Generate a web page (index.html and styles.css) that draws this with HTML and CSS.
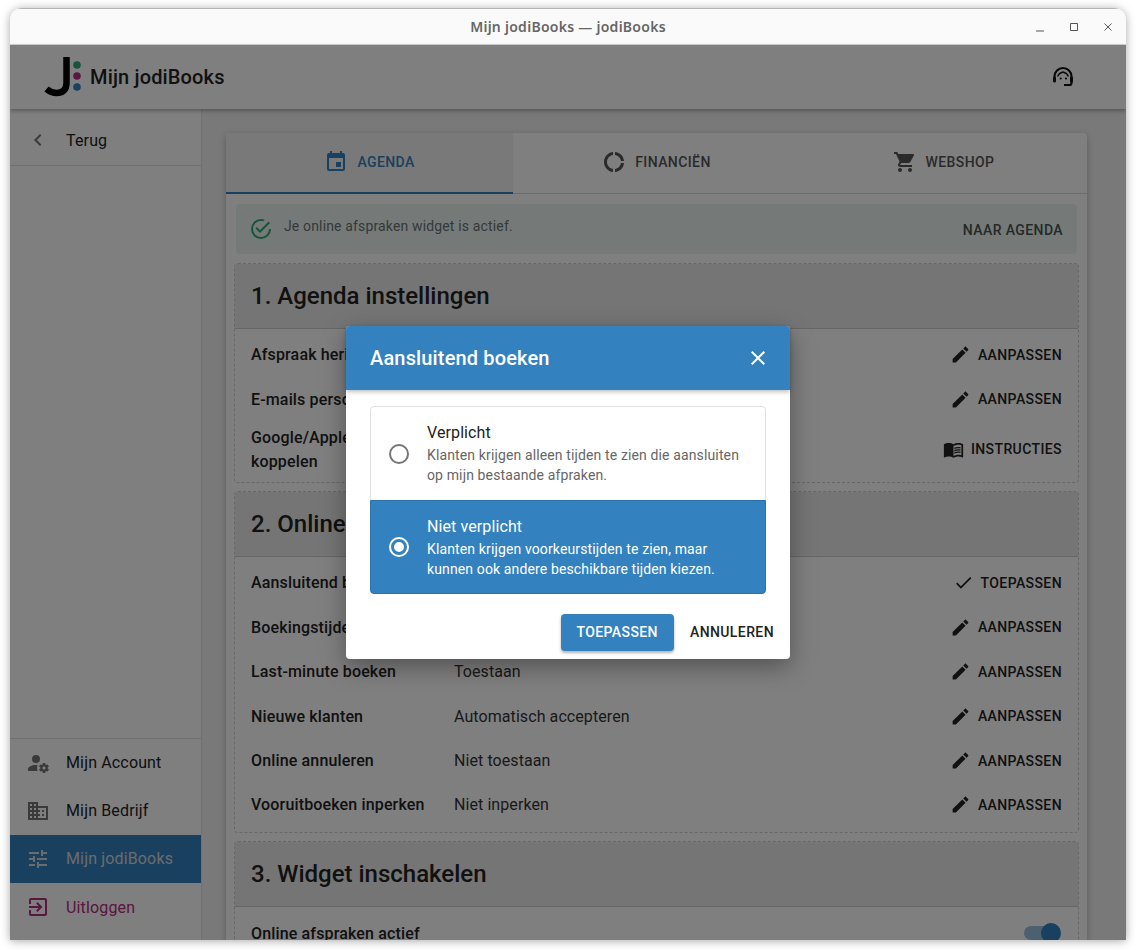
FILE: index.html
```html
<!DOCTYPE html>
<html lang="nl">
<head>
<meta charset="utf-8">
<title>Mijn jodiBooks — jodiBooks</title>
<link rel="stylesheet" href="styles.css">
</head>
<body>
<div class="window">
  <div class="titlebar">
    <span></span>
    <span class="wintitle">Mijn jodiBooks — jodiBooks</span>
    <div class="winctrls">
      <svg viewBox="0 0 10 10" class="winico"><path d="M1 9h8"/></svg>
      <svg viewBox="0 0 10 10" class="winico"><path d="M1.500 1.500h7v7h-7z"/></svg>
      <svg viewBox="0 0 10 10" class="winico"><path d="M1.500 1.500l7 7M8.500 1.500l-7 7"/></svg>
    </div>
  </div>
  <div class="app">
    <header class="topbar">
      <div class="brand">
        <svg class="logo" viewBox="0 0 38 40">
          <path class="logo-j" d="M22.500 0V26c0 7-4 10-10 10-4 0-7-1.500-10-4"/>
          <circle class="dot-g" cx="33" cy="8" r="3.800"/>
          <circle class="dot-m" cx="33" cy="19" r="3.800"/>
          <circle class="dot-b" cx="33" cy="30" r="3.800"/>
        </svg>
        <span class="brandname">Mijn jodiBooks</span>
      </div>
      <svg class="agent" viewBox="0 0 24 24">
        <path class="agent-line" d="M3.500 15v-3.500a8.500 8.500 0 0 1 17 0V18q0 2-2 2h-5.500"/>
        <path class="agent-face" d="M6.500 11.500c1-2.500 3.500-4 5.500-4.500 2 .5 4.500 2 5.500 4.500"/>
        <rect x="2" y="11.500" width="3" height="6" rx="1.500"/>
        <rect x="19" y="11.500" width="3" height="6" rx="1.500"/>
        <circle cx="9.700" cy="13.500" r="1.100"/>
        <circle cx="15" cy="13.500" r="1.100"/>
      </svg>
    </header>
    <div class="body">
      <aside class="sidebar">
        <div class="back">
          <svg class="ico ico-grey" viewBox="0 0 24 24"><path d="M15.410 7.410L14 6l-6 6 6 6 1.410-1.410L10.830 12z"/></svg>
          <span>Terug</span>
        </div>
        <nav class="nav">
          <a class="navitem">
            <svg class="ico ico-grey" viewBox="0 0 24 24"><path d="M10 4A4 4 0 0 0 6 8A4 4 0 0 0 10 12A4 4 0 0 0 14 8A4 4 0 0 0 10 4M17 12C16.870 12 16.760 12.090 16.740 12.210L16.550 13.530C16.250 13.660 15.960 13.820 15.700 14L14.460 13.500C14.350 13.500 14.220 13.500 14.150 13.630L13.150 15.360C13.090 15.470 13.110 15.600 13.210 15.680L14.270 16.500C14.250 16.670 14.240 16.830 14.240 17C14.240 17.170 14.250 17.330 14.270 17.500L13.210 18.320C13.120 18.400 13.090 18.530 13.150 18.640L14.150 20.370C14.210 20.500 14.340 20.500 14.460 20.500L15.700 20C15.960 20.180 16.240 20.350 16.550 20.470L16.740 21.790C16.760 21.910 16.860 22 17 22H19C19.110 22 19.220 21.910 19.240 21.790L19.430 20.470C19.730 20.340 20 20.180 20.270 20L21.500 20.500C21.630 20.500 21.760 20.500 21.830 20.370L22.830 18.640C22.890 18.530 22.860 18.400 22.770 18.320L21.700 17.500C21.720 17.330 21.740 17.170 21.740 17C21.740 16.830 21.730 16.670 21.700 16.500L22.760 15.680C22.850 15.600 22.880 15.470 22.820 15.360L21.820 13.630C21.760 13.500 21.630 13.500 21.500 13.500L20.270 14C20 13.820 19.730 13.650 19.420 13.530L19.230 12.210C19.220 12.090 19.110 12 19 12H17M10 14C5.580 14 2 15.790 2 18V20H11.680A7 7 0 0 1 11 17A7 7 0 0 1 11.640 14.090C11.110 14.030 10.560 14 10 14M18 15.500C18.830 15.500 19.500 16.170 19.500 17C19.500 17.830 18.830 18.500 18 18.500C17.160 18.500 16.500 17.830 16.500 17C16.500 16.170 17.170 15.500 18 15.500Z"/></svg>
            <span>Mijn Account</span>
          </a>
          <a class="navitem">
            <svg class="ico ico-grey" viewBox="0 0 24 24"><path d="M12 7V3H2v18h20V7H12zM6 19H4v-2h2v2zm0-4H4v-2h2v2zm0-4H4V9h2v2zm0-4H4V5h2v2zm4 12H8v-2h2v2zm0-4H8v-2h2v2zm0-4H8V9h2v2zm0-4H8V5h2v2zm10 12h-8v-2h2v-2h-2v-2h2v-2h-2V9h8v10zm-2-8h-2v2h2v-2zm0 4h-2v2h2v-2z"/></svg>
            <span>Mijn Bedrijf</span>
          </a>
          <a class="navitem navitem-active">
            <svg class="ico" viewBox="0 0 24 24"><path d="M3 17v2h6v-2H3zM3 5v2h10V5H3zm10 16v-2h8v-2h-8v-2h-2v6h2zM7 9v2H3v2h4v2h2V9H7zm14 4v-2H11v2h10zm-6-4h2V7h4V5h-4V3h-2v6z"/></svg>
            <span>Mijn jodiBooks</span>
          </a>
          <a class="navitem navitem-logout">
            <svg class="ico" viewBox="0 0 24 24"><path d="M10.090 15.590L11.500 17l5-5-5-5-1.410 1.410L12.670 11H3v2h9.670l-2.580 2.590zM19 3H5c-1.110 0-2 .9-2 2v4h2V5h14v14H5v-4H3v4c0 1.100.89 2 2 2h14c1.100 0 2-.9 2-2V5c0-1.100-.9-2-2-2z"/></svg>
            <span>Uitloggen</span>
          </a>
        </nav>
      </aside>
      <main class="main">
        <div class="card">
          <div class="tabs">
            <div class="tab tab-active">
              <svg class="ico" viewBox="0 0 24 24"><path d="M17 12h-5v5h5v-5zM16 1v2H8V1H6v2H5c-1.110 0-1.990.9-1.990 2L3 19c0 1.100.89 2 2 2h14c1.100 0 2-.9 2-2V5c0-1.100-.9-2-2-2h-1V1h-2zm3 18H5V8h14v11z"/></svg>
              <span>Agenda</span>
            </div>
            <div class="tab">
              <svg class="ico" viewBox="0 0 24 24"><path d="M11 5.080V2c-5 .5-9 4.810-9 10s4 9.500 9 10v-3.080c-3.400-.49-6-3.400-6-6.920s2.600-6.430 6-6.920zM18.970 11H22c-.47-5-4-8.530-9-9v3.080C16 5.510 18.540 8 18.970 11zM13 18.920V22c5-.47 8.530-4 9-9h-3.030c-.43 3-2.970 5.490-5.970 5.920z"/></svg>
              <span>Financiën</span>
            </div>
            <div class="tab">
              <svg class="ico" viewBox="0 0 24 24"><path d="M7 18c-1.100 0-1.990.9-1.990 2S5.900 22 7 22s2-.9 2-2-.9-2-2-2zM1 2v2h2l3.600 7.590-1.350 2.450c-.16.28-.25.61-.25.96 0 1.100.9 2 2 2h12v-2H7.420c-.14 0-.25-.11-.25-.25l.03-.12.9-1.630h7.450c.75 0 1.410-.41 1.750-1.030l3.580-6.490c.08-.14.12-.31.12-.48 0-.55-.45-1-1-1H5.210l-.94-2H1zm16 16c-1.100 0-1.990.9-1.990 2s.89 2 1.990 2 2-.9 2-2-.9-2-2-2z"/></svg>
              <span>Webshop</span>
            </div>
          </div>
          <div class="content">
            <div class="alert">
              <svg class="ico ico-green" viewBox="0 0 24 24"><path d="M20 12A8 8 0 0 1 12 20A8 8 0 0 1 4 12A8 8 0 0 1 12 4C12.760 4 13.500 4.110 14.200 4.310L15.770 2.740C14.610 2.260 13.340 2 12 2A10 10 0 0 0 2 12A10 10 0 0 0 12 22A10 10 0 0 0 22 12M7.910 10.080L6.500 11.500L11 16L21 6L19.590 4.580L11 13.170L7.910 10.080Z"/></svg>
              <span class="alert-text">Je online afspraken widget is actief.</span>
              <span class="alert-btn">Naar agenda</span>
            </div>

            <section class="section">
              <h2 class="section-title">1. Agenda instellingen</h2>
              <div class="rows">
                <div class="row"><span class="label">Afspraak herinneringen</span><span class="action"><svg class="ico-sm" viewBox="0 0 24 24"><use href="#pencil"/></svg>Aanpassen</span></div>
                <div class="row"><span class="label">E-mails personaliseren</span><span class="action"><svg class="ico-sm" viewBox="0 0 24 24"><use href="#pencil"/></svg>Aanpassen</span></div>
                <div class="row row-tall"><span class="label label-tall">Google/Apple agenda<br>koppelen</span><span class="action"><svg class="ico-sm" viewBox="0 0 24 24"><path d="M21 5c-1.110-.35-2.330-.5-3.500-.5-1.950 0-4.050.4-5.500 1.500-1.450-1.100-3.550-1.500-5.500-1.500S2.450 4.900 1 6v14.650c0 .25.25.5.5.5.1 0 .15-.05.25-.05C3.100 20.450 5.050 20 6.500 20c1.950 0 4.050.4 5.500 1.500 1.350-.85 3.800-1.500 5.500-1.500 1.650 0 3.350.3 4.750 1.050.1.05.15.05.25.05.25 0 .5-.25.5-.5V6c-.6-.45-1.250-.75-2-1zm0 13.500c-1.100-.35-2.300-.5-3.500-.5-1.700 0-4.150.65-5.500 1.500V8c1.350-.85 3.800-1.500 5.500-1.500 1.200 0 2.400.15 3.500.5v11.500z"/><path d="M17.500 10.500c.88 0 1.730.09 2.500.26V9.240c-.79-.15-1.640-.24-2.500-.24-1.700 0-3.240.29-4.500.83v1.660c1.130-.64 2.700-.99 4.500-.99zM13 12.490v1.660c1.130-.64 2.700-.99 4.500-.99.88 0 1.730.09 2.500.26V11.900c-.79-.15-1.640-.24-2.500-.24-1.700 0-3.240.3-4.500.83zM17.500 14.330c-1.700 0-3.240.29-4.500.83v1.660c1.130-.64 2.700-.99 4.500-.99.88 0 1.730.09 2.500.26v-1.520c-.79-.16-1.640-.24-2.500-.24z"/></svg>Instructies</span></div>
              </div>
            </section>

            <section class="section">
              <h2 class="section-title">2. Online boeken</h2>
              <div class="rows">
                <div class="row"><span class="label">Aansluitend boeken</span><span class="action"><svg class="ico-sm" viewBox="0 0 24 24"><path d="M21 7L9 19l-5.500-5.500 1.410-1.410L9 16.170 19.590 5.590 21 7z"/></svg>Toepassen</span></div>
                <div class="row"><span class="label">Boekingstijden</span><span class="action"><svg class="ico-sm" viewBox="0 0 24 24"><use href="#pencil"/></svg>Aanpassen</span></div>
                <div class="row"><span class="label">Last-minute boeken</span><span class="value">Toestaan</span><span class="action"><svg class="ico-sm" viewBox="0 0 24 24"><use href="#pencil"/></svg>Aanpassen</span></div>
                <div class="row"><span class="label">Nieuwe klanten</span><span class="value">Automatisch accepteren</span><span class="action"><svg class="ico-sm" viewBox="0 0 24 24"><use href="#pencil"/></svg>Aanpassen</span></div>
                <div class="row"><span class="label">Online annuleren</span><span class="value">Niet toestaan</span><span class="action"><svg class="ico-sm" viewBox="0 0 24 24"><use href="#pencil"/></svg>Aanpassen</span></div>
                <div class="row"><span class="label">Vooruitboeken inperken</span><span class="value">Niet inperken</span><span class="action"><svg class="ico-sm" viewBox="0 0 24 24"><use href="#pencil"/></svg>Aanpassen</span></div>
              </div>
            </section>

            <section class="section">
              <h2 class="section-title">3. Widget inschakelen</h2>
              <div class="rows">
                <div class="row"><span class="label">Online afspraken actief</span><span class="switch"></span></div>
              </div>
            </section>
          </div>
        </div>
      </main>
    </div>
    <div class="scrim">
      <div class="dialog">
        <div class="dialog-head">
          <span class="dialog-title">Aansluitend boeken</span>
          <svg class="ico" viewBox="0 0 24 24"><path d="M19 6.410L17.590 5 12 10.590 6.410 5 5 6.410 10.590 12 5 17.590 6.410 19 12 13.410 17.590 19 19 17.590 13.410 12z"/></svg>
        </div>
        <div class="dialog-body">
          <div class="choices">
            <div class="choice">
              <svg class="ico radio" viewBox="0 0 24 24"><path d="M12 20A8 8 0 0 1 4 12A8 8 0 0 1 12 4A8 8 0 0 1 20 12A8 8 0 0 1 12 20M12 2A10 10 0 0 0 2 12A10 10 0 0 0 12 22A10 10 0 0 0 22 12A10 10 0 0 0 12 2Z"/></svg>
              <div class="choice-text">
                <div class="choice-title">Verplicht</div>
                <div class="choice-sub">Klanten krijgen alleen tijden te zien die aansluiten<br>op mijn bestaande afpraken.</div>
              </div>
            </div>
            <div class="choice choice-on">
              <svg class="ico radio" viewBox="0 0 24 24"><path d="M12 20A8 8 0 0 1 4 12A8 8 0 0 1 12 4A8 8 0 0 1 20 12A8 8 0 0 1 12 20M12 2A10 10 0 0 0 2 12A10 10 0 0 0 12 22A10 10 0 0 0 22 12A10 10 0 0 0 12 2M12 7A5 5 0 0 0 7 12A5 5 0 0 0 12 17A5 5 0 0 0 17 12A5 5 0 0 0 12 7Z"/></svg>
              <div class="choice-text">
                <div class="choice-title">Niet verplicht</div>
                <div class="choice-sub">Klanten krijgen voorkeurstijden te zien, maar<br>kunnen ook andere beschikbare tijden kiezen.</div>
              </div>
            </div>
          </div>
        </div>
        <div class="dialog-actions">
          <span class="btn btn-primary">Toepassen</span>
          <span class="btn">Annuleren</span>
        </div>
      </div>
    </div>
  </div>
</div>
<svg class="defs" width="0" height="0"><defs><path id="pencil" d="M3 17.250V21h3.750L17.810 9.940l-3.750-3.750L3 17.250zM20.710 7.040c.39-.39.39-1.020 0-1.410l-2.340-2.340c-.39-.39-1.020-.39-1.410 0l-1.830 1.830 3.750 3.750 1.830-1.830z"/></defs></svg>
</body>
</html>
```

FILE: styles.css
```css
* { box-sizing: border-box; }
html, body { margin: 0; height: 950px; overflow: hidden; }
body { padding: 8px 10px 0; background: #fff; font-family: Roboto, "Liberation Sans", sans-serif; color: #222; font-size: 16px; letter-spacing: .15px; }
.defs { position: absolute; }
.ico { width: 24px; height: 24px; fill: currentColor; flex: none; display: block; }
.ico-sm { width: 21px; height: 21px; fill: currentColor; flex: none; display: block; }
.ico-grey { color: #757575; }
.ico-green { color: #2fa777; }

.window { width: 1116px; height: 932px; display: flex; flex-direction: column; border-radius: 12px 12px 0 0; box-shadow: 0 1px 10px rgba(0,0,0,.35); overflow: hidden; }
.titlebar { height: 37px; flex: none; display: grid; grid-template-columns: 1fr auto 1fr; align-items: center; background: #fafafa; border-top: 1px solid #b4b4b4; border-bottom: 1px solid #d0d0d0; }
.wintitle { font-family: "Noto Sans", sans-serif; font-weight: 600; font-size: 14px; letter-spacing: .27px; color: #666; }
.winctrls { display: flex; justify-content: flex-end; gap: 24px; padding-right: 13px; }
.winico { width: 10px; height: 10px; fill: none; stroke: #555; stroke-width: 1; }

.app { flex: 1; min-height: 0; position: relative; display: flex; flex-direction: column; background: #f2f2f2; }
.topbar { height: 64px; flex: none; background: #fff; display: flex; align-items: center; justify-content: space-between; padding: 0 51px 0 34px; box-shadow: 0 2px 4px rgba(0,0,0,.3); position: relative; z-index: 1; }
.brand { display: flex; align-items: center; gap: 8px; }
.logo { width: 38px; height: 40px; flex: none; }
.logo-j { fill: none; stroke: #000; stroke-width: 6.500; }
.dot-g { fill: #2da878; }
.dot-m { fill: #b42a80; }
.dot-b { fill: #3282c0; }
.brandname { font-size: 20px; font-weight: 500; letter-spacing: .15px; color: #222; }
.agent { width: 24px; height: 24px; fill: #111; flex: none; }
.agent-line { fill: none; stroke: #111; stroke-width: 2.200; }
.agent-face { fill: none; stroke: #111; stroke-width: 1.300; }

.body { flex: 1; min-height: 0; display: flex; }
.sidebar { width: 192px; flex: none; display: flex; flex-direction: column; justify-content: space-between; background: #fff; border-right: 1px solid #e0e0e0; padding-bottom: 9px; }
.back { height: 57px; display: flex; align-items: center; gap: 16px; padding: 6px 0 0 16px; border-bottom: 1px solid #e0e0e0; }
.nav { border-top: 1px solid #e0e0e0; display: flex; flex-direction: column; }
.navitem { height: 48px; display: flex; align-items: center; gap: 16px; padding-left: 16px; }
.navitem span { position: relative; top: -1px; }
.navitem-active { background: #3281be; color: #d8d8d8; }
.navitem-logout { color: #b42a80; }
.navitem-logout span { top: 0; }

.main { flex: 1; min-width: 0; padding: 24px 39px 0 24px; overflow: hidden; }
.card { background: #fff; border-radius: 4px; box-shadow: 0 2px 6px rgba(0,0,0,.25); }
.tabs { display: grid; grid-template-columns: repeat(3, 1fr); height: 61px; border-bottom: 1px solid #d8d8d8; }
.tab { display: flex; align-items: center; justify-content: center; gap: 9px; text-transform: uppercase; font-size: 14px; font-weight: 500; letter-spacing: .4px; color: #555; padding-bottom: 2px; }
.tab-active { color: #3281be; background: #f2f2f2; border-bottom: 2px solid #3281be; margin-bottom: -1px; padding-bottom: 1px; }
.content { padding: 10px 8px 8px; }
.alert { margin: 0 2px 9px; height: 50px; display: flex; align-items: center; background: #ebf5f2; border-radius: 4px; padding: 0 14px 0 13px; color: #6a7270; }
.alert-text { font-size: 14px; letter-spacing: .15px; margin-left: 11px; position: relative; top: -3px; }
.alert-btn { margin-left: auto; text-transform: uppercase; font-size: 14px; font-weight: 500; letter-spacing: .4px; color: #4a5250; padding-top: 1px; }

.section { border: 1px dashed #cfcfcf; border-radius: 4px; margin-bottom: 8px; background: #fff; }
.section-title { margin: 0; height: 65px; display: flex; align-items: center; padding-left: 16px; font-size: 24px; font-weight: 500; letter-spacing: 0; background: #ebebeb; border-bottom: 1px solid #ccc; color: #222; }
.rows { padding: 3.800px 16px 5.200px; }
.row { height: 44.400px; display: flex; align-items: center; }
.row-tall { height: 55.200px; line-height: 24px; }
.label { width: 203px; flex: none; font-weight: 500; font-size: 16px; color: #222; }
.label-tall { padding-top: 2px; }
.value { color: #333; letter-spacing: .08px; }
.action { margin-left: auto; display: flex; align-items: center; gap: 7px; text-transform: uppercase; font-size: 14px; font-weight: 500; letter-spacing: .4px; color: #222; }
.switch { margin-left: auto; margin-right: 2px; width: 36px; height: 14px; border-radius: 7px; background: #98c0de; position: relative; }
.switch::after { content: ""; position: absolute; right: -1px; top: -3px; width: 20px; height: 20px; border-radius: 50%; background: #3281be; }

.scrim { position: absolute; inset: 0; z-index: 5; background: rgba(0,0,0,.5); display: flex; align-items: center; justify-content: center; }
.dialog { width: 444px; height: 333px; background: #fff; border-radius: 4px; box-shadow: 0 8px 24px rgba(0,0,0,.35); display: flex; flex-direction: column; }
.dialog-head { height: 64px; flex: none; background: #3381bf; color: #fff; border-radius: 4px 4px 0 0; display: flex; align-items: center; justify-content: space-between; padding: 0 20px 0 24px; box-shadow: 0 2px 4px rgba(0,0,0,.25); }
.dialog-title { font-size: 20px; font-weight: 500; letter-spacing: .15px; }
.dialog-body { padding: 16px 24px 20px; }
.choices { border: 1px solid #e0e0e0; border-radius: 4px; }
.choice { height: 93px; display: flex; align-items: center; padding: 0 18px 2px 16px; gap: 16px; color: #222; }
.radio { color: #757575; margin-top: 2px; }
.choice-title { font-size: 16px; line-height: 24px; letter-spacing: .1px; }
.choice-sub { font-size: 14px; line-height: 20px; color: #666; letter-spacing: .13px; }
.choice-on { height: 94px; background: #3381bf; color: #fff; margin: 0 -1px -1px; border: 1px solid #2c72aa; border-radius: 0 0 4px 4px; padding: 0 18px 0 16px; }
.choice-on .radio { margin-top: 0; }
.choice-on .radio, .choice-on .choice-sub { color: #fff; }
.dialog-actions { display: flex; justify-content: flex-end; align-items: center; padding-right: 16px; }
.btn { text-transform: uppercase; font-size: 14px; font-weight: 500; letter-spacing: .4px; color: #222; height: 37px; display: flex; align-items: center; margin-left: 16px; padding-bottom: 1px; }
.btn-primary { background: #3381bf; color: #fff; padding: 0 16px 1px 15px; border-radius: 4px; box-shadow: 0 2px 3px rgba(0,0,0,.3); }
```
